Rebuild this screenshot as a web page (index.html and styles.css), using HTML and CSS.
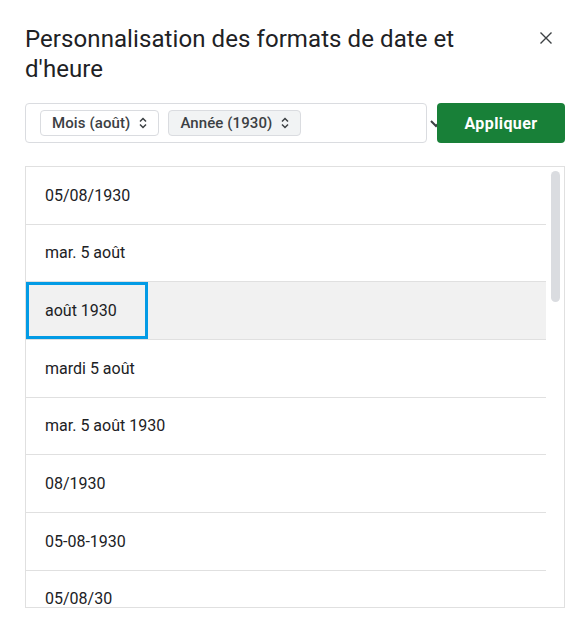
FILE: index.html
```html
<!DOCTYPE html>
<html lang="fr">
<head>
<meta charset="utf-8">
<link rel="stylesheet" href="styles.css">
</head>
<body>
<div class="dialog">
  <div class="header">
    <h1 class="title">Personnalisation des formats de date et d'heure</h1>
    <button class="close" aria-label="Fermer">
      <svg width="12" height="12" viewBox="0 0 12 12"><path d="M0.5 0.5 L11.5 11.5 M11.5 0.5 L0.5 11.5" stroke="#3c4043" stroke-width="1.4" fill="none"/></svg>
    </button>
  </div>
  <div class="toolbar">
    <div class="input">
      <span class="chip">Mois (août)
        <svg class="updown" width="8" height="12" viewBox="0 0 8 12"><path d="M1 4.5 L4 1.5 L7 4.5 M1 7.5 L4 10.5 L7 7.5" stroke="#3c4043" stroke-width="1.5" fill="none"/></svg>
      </span>
      <span class="chip chip-active">Année (1930)
        <svg class="updown" width="8" height="12" viewBox="0 0 8 12"><path d="M1 4.5 L4 1.5 L7 4.5 M1 7.5 L4 10.5 L7 7.5" stroke="#3c4043" stroke-width="1.5" fill="none"/></svg>
      </span>
    </div>
    <div class="caret">
      <svg width="10" height="12" viewBox="0 0 10 12"><path d="M4 4 L9 9 L14 4" stroke="#3c4043" stroke-width="2" fill="none"/></svg>
    </div>
    <button class="apply">Appliquer</button>
  </div>
  <div class="list">
    <div class="rows">
      <div class="row"><span class="label">05/08/1930</span></div>
      <div class="row"><span class="label">mar. 5 août</span></div>
      <div class="row row-selected"><span class="label label-focus">août 1930</span></div>
      <div class="row"><span class="label">mardi 5 août</span></div>
      <div class="row"><span class="label">mar. 5 août 1930</span></div>
      <div class="row"><span class="label">08/1930</span></div>
      <div class="row"><span class="label">05-08-1930</span></div>
      <div class="row"><span class="label">05/08/30</span></div>
    </div>
    <div class="track"><div class="thumb"></div></div>
  </div>
</div>
</body>
</html>
```

FILE: styles.css
```css
* { box-sizing: border-box; }
html, body { margin: 0; padding: 0; background: #fff; }
body { font-family: Roboto, "Liberation Sans", sans-serif; color: #202124; }

.dialog {
  width: 588px;
  padding: 24px 23px 0 25px;
}

.header {
  display: flex;
  align-items: flex-start;
  justify-content: space-between;
}
.title {
  margin: 0;
  max-width: 480px;
  font-family: Roboto, "Liberation Sans", sans-serif;
  font-weight: 400;
  font-size: 24px;
  line-height: 30px;
  letter-spacing: 0.08px;
  color: #202124;
}
.close {
  margin: 8px 13px 0 0;
  padding: 0;
  border: 0;
  background: none;
  width: 12px;
  height: 12px;
  display: flex;
}

.toolbar {
  display: flex;
  align-items: stretch;
  margin-top: 19px;
  height: 40px;
}
.input {
  width: 402px;
  border: 1px solid #dadce0;
  border-radius: 4px;
  display: flex;
  align-items: center;
  gap: 9px;
  padding-left: 14px;
}
.chip {
  display: flex;
  align-items: center;
  gap: 9px;
  height: 26px;
  padding: 0 11px 0 11px;
  border: 1px solid #dadce0;
  border-radius: 4px;
  background: #fff;
  font-size: 15px;
  font-weight: 500;
  letter-spacing: 0.1px;
  color: #3c4043;
}
.chip-active { background: #f1f3f4; }
.updown { display: block; }
.caret {
  width: 10px;
  display: flex;
  align-items: center;
  overflow: hidden;
}
.caret svg { display: block; }
.apply {
  width: 128px;
  border: 0;
  border-radius: 4px;
  background: #188038;
  color: #fff;
  font-family: Roboto, "Liberation Sans", sans-serif;
  font-size: 16px;
  font-weight: 700;
  letter-spacing: 0.4px;
  padding: 0;
}

.list {
  margin-top: 23px;
  width: 540px;
  height: 442px;
  border: 1px solid #e0e0e0;
  display: flex;
  overflow: hidden;
}
.rows {
  width: 520px;
  flex: none;
}
.row {
  height: 57.67px;
  border-bottom: 1px solid #e0e0e0;
  display: flex;
  align-items: stretch;
  font-size: 16px;
  color: #202124;
}
.row-selected { background: #f1f1f1; }
.label {
  display: flex;
  align-items: center;
  padding-left: 19px;
}
.label-focus {
  width: 122px;
  box-shadow: inset 0 0 0 3px #039be5;
}
.track {
  flex: 1;
  padding: 4px 4px 0 5px;
}
.thumb {
  width: 9px;
  height: 131px;
  border-radius: 5px;
  background: #dadce0;
}
```
